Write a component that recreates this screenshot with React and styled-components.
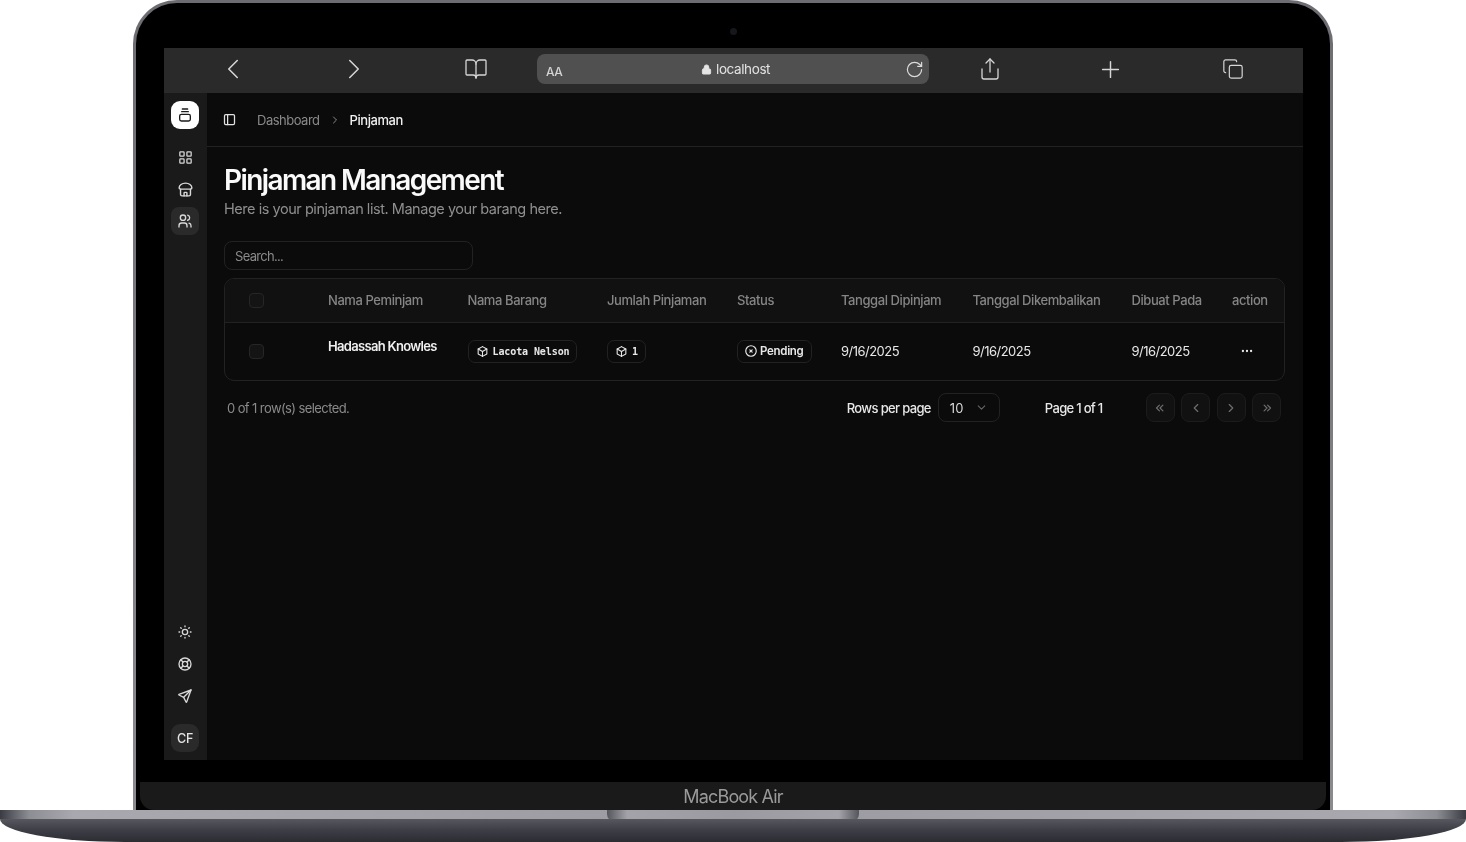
import React from 'react'
import styled, { createGlobalStyle } from 'styled-components'
import {
  ChevronLeft,
  ChevronRight,
  BookOpen,
  Lock,
  RotateCw,
  Share,
  Plus,
  Copy,
} from 'lucide-react'
import {
  TbLayoutGrid,
  TbUsers,
  TbSun,
  TbLifebuoy,
  TbSend,
  TbLayoutSidebar,
  TbBox,
  TbCircleX,
  TbDots,
  TbChevronDown,
  TbChevronRight,
  TbChevronLeft,
  TbChevronsLeft,
  TbChevronsRight,
} from 'react-icons/tb'

const GlobalStyle = createGlobalStyle`
  html, body {
    margin: 0;
    background: #fff;
    overflow: hidden;
  }
  * {
    box-sizing: border-box;
  }
`

const LogoIcon = () => (
  <svg width="16" height="16" viewBox="0 0 24 24" fill="none" stroke="currentColor" strokeWidth="2" strokeLinecap="round">
    <path d="M8 3h8M7 7h10" />
    <rect x="4" y="11" width="16" height="10" rx="2.5" />
  </svg>
)

const StoreIcon = () => (
  <svg width="17" height="17" viewBox="0 0 24 24" fill="none" stroke="currentColor" strokeWidth="2" strokeLinecap="round" strokeLinejoin="round">
    <path d="M3 10c0-4 4-7 9-7s9 3 9 7c0 1-1 1.500-2 1.500H5c-1 0-2-.5-2-1.500z" />
    <path d="M5 11.500V19a2 2 0 0 0 2 2h10a2 2 0 0 0 2-2v-7.500" />
    <path d="M10 21v-4a1 1 0 0 1 1-1h2a1 1 0 0 1 1 1v4" />
  </svg>
)

const columns = '103px 139.500px 139.500px 130px 104px 131.500px 159px 100.500px 1fr'

export default function App() {
  return (
    <Page>
      <GlobalStyle />
      <Lid>
        <Bezel>
          <ScreenArea>
            <Camera />
            <Screen>
              <Toolbar>
                <ToolIcon $ml={57}><ChevronLeft size={34} strokeWidth={1.1} /></ToolIcon>
                <ToolIcon $ml={97}><ChevronRight size={34} strokeWidth={1.1} /></ToolIcon>
                <ToolIcon $ml={98}><BookOpen size={24} strokeWidth={1.3} /></ToolIcon>
                <AddressBar>
                  <AaLabel>AA</AaLabel>
                  <UrlLabel>
                    <Lock size={11} fill="#e6e6e6" strokeWidth={2} />
                    localhost
                  </UrlLabel>
                  <RotateCw size={19} strokeWidth={1.5} color="#dcdcdc" />
                </AddressBar>
                <ToolIcon $ml={49}><Share size={24} strokeWidth={1.3} /></ToolIcon>
                <ToolIcon $ml={96}><Plus size={27} strokeWidth={1.3} /></ToolIcon>
                <ToolIcon $ml={99}><Copy size={22} strokeWidth={1.3} /></ToolIcon>
              </Toolbar>
              <AppBody>
                <Sidebar>
                  <SideGroup>
                    <LogoButton><LogoIcon /></LogoButton>
                    <SideNav>
                      <SideButton><TbLayoutGrid size={17} strokeWidth={1.8} /></SideButton>
                      <SideButton><StoreIcon /></SideButton>
                      <SideButton $active><TbUsers size={16} /></SideButton>
                    </SideNav>
                  </SideGroup>
                  <SideGroup>
                    <SideNav>
                      <SideButton><TbSun size={16} /></SideButton>
                      <SideButton><TbLifebuoy size={16} /></SideButton>
                      <SideButton><TbSend size={16} /></SideButton>
                    </SideNav>
                    <Avatar>CF</Avatar>
                  </SideGroup>
                </Sidebar>
                <Main>
                  <Header>
                    <TbLayoutSidebar size={15} color="#e2e2e2" />
                    <Crumb>Dashboard</Crumb>
                    <TbChevronRight size={12} color="#8a8a8a" />
                    <CrumbCurrent>Pinjaman</CrumbCurrent>
                  </Header>
                  <Content>
                    <Title>Pinjaman Management</Title>
                    <Subtitle>Here is your pinjaman list. Manage your barang here.</Subtitle>
                    <SearchInput placeholder="Search..." readOnly />
                    <TableCard>
                      <HeadRow>
                        <CheckCell><Checkbox /></CheckCell>
                        <HeadCell>Nama Peminjam</HeadCell>
                        <HeadCell>Nama Barang</HeadCell>
                        <HeadCell>Jumlah Pinjaman</HeadCell>
                        <HeadCell>Status</HeadCell>
                        <HeadCell>Tanggal Dipinjam</HeadCell>
                        <HeadCell>Tanggal Dikembalikan</HeadCell>
                        <HeadCell>Dibuat Pada</HeadCell>
                        <HeadCell>action</HeadCell>
                      </HeadRow>
                      <BodyRow>
                        <CheckCell><Checkbox /></CheckCell>
                        <NameCell>Hadassah Knowles</NameCell>
                        <BodyCell>
                          <Badge $mono><TbBox size={13} />Lacota Nelson</Badge>
                        </BodyCell>
                        <BodyCell>
                          <Badge $mono><TbBox size={13} />1</Badge>
                        </BodyCell>
                        <BodyCell>
                          <Badge><TbCircleX size={14} />Pending</Badge>
                        </BodyCell>
                        <BodyCell>9/16/2025</BodyCell>
                        <BodyCell>9/16/2025</BodyCell>
                        <BodyCell>9/16/2025</BodyCell>
                        <BodyCell><DotsWrap><TbDots size={14} /></DotsWrap></BodyCell>
                      </BodyRow>
                    </TableCard>
                    <TableFooter>
                      <Selected>0 of 1 row(s) selected.</Selected>
                      <Pager>
                        <RowsLabel>Rows per page</RowsLabel>
                        <PageSelect>
                          10
                          <TbChevronDown size={13} color="#666" />
                        </PageSelect>
                        <PageLabel>Page 1 of 1</PageLabel>
                        <PageButtons>
                          <PageButton><TbChevronsLeft size={14} /></PageButton>
                          <PageButton><TbChevronLeft size={14} /></PageButton>
                          <PageButton><TbChevronRight size={14} /></PageButton>
                          <PageButton><TbChevronsRight size={14} /></PageButton>
                        </PageButtons>
                      </Pager>
                    </TableFooter>
                  </Content>
                </Main>
              </AppBody>
            </Screen>
          </ScreenArea>
          <Chin>MacBook Air</Chin>
        </Bezel>
      </Lid>
      <Base>
        <BaseTop>
          <Notch />
        </BaseTop>
        <BaseBottom />
      </Base>
    </Page>
  )
}

const Page = styled.div`
  width: 1466px;
  height: 842px;
  overflow: hidden;
  background: #fff;
  font-family: Inter, 'Liberation Sans', sans-serif;
  filter: blur(0.4px);
`

const Lid = styled.div`
  width: 1200px;
  height: 810px;
  margin: 0 auto;
  padding: 3px 3px 0;
  border-radius: 44px 44px 0 0;
  background: linear-gradient(180deg, #6c6c72 0%, #8a8a90 100%);
`

const Bezel = styled.div`
  height: 100%;
  display: flex;
  flex-direction: column;
  background: #000;
  border-radius: 41px 41px 0 0;
`

const ScreenArea = styled.div`
  flex: 1;
  display: flex;
  flex-direction: column;
  align-items: center;
  padding: 25px 27px 22px 28px;
`

const Camera = styled.div`
  width: 7px;
  height: 7px;
  flex-shrink: 0;
  margin-bottom: 13px;
  border-radius: 50%;
  background: #15171a;
`

const Screen = styled.div`
  flex: 1;
  width: 100%;
  display: flex;
  flex-direction: column;
  min-height: 0;
`

const Toolbar = styled.div`
  height: 45px;
  flex-shrink: 0;
  padding-bottom: 3px;
  display: flex;
  align-items: center;
  background: #2a2a2a;
`

const ToolIcon = styled.div`
  width: 24px;
  height: 24px;
  flex-shrink: 0;
  display: flex;
  align-items: center;
  justify-content: center;
  margin-left: ${({ $ml }) => $ml}px;
  color: #d6d6d6;

  svg {
    flex-shrink: 0;
  }
`

const AddressBar = styled.div`
  width: 392px;
  height: 30px;
  margin-left: 49px;
  padding: 0 5px 0 9px;
  display: flex;
  align-items: center;
  justify-content: space-between;
  border-radius: 8px;
  background: #505050;
`

const AaLabel = styled.span`
  margin-top: 5px;
  font-size: 12px;
  font-weight: 500;
  letter-spacing: -0.5px;
  color: #d4d4d4;
`

const UrlLabel = styled.span`
  display: flex;
  align-items: center;
  gap: 4px;
  margin-left: 4px;
  font-size: 13.500px;
  letter-spacing: -0.400px;
  color: #e2e2e2;
`

const AppBody = styled.div`
  flex: 1;
  display: flex;
  min-height: 0;
`

const Sidebar = styled.aside`
  width: 43px;
  flex-shrink: 0;
  padding: 8px 7px 8px 7px;
  display: flex;
  flex-direction: column;
  justify-content: space-between;
  background: #1a1a1a;
`

const SideGroup = styled.div`
  display: flex;
  flex-direction: column;
  gap: 14px;
`

const SideNav = styled.nav`
  display: flex;
  flex-direction: column;
  gap: 4px;
`

const LogoButton = styled.div`
  width: 28px;
  height: 28px;
  display: flex;
  align-items: center;
  justify-content: center;
  border-radius: 9px;
  background: #fff;
  color: #1a1a1a;
`

const SideButton = styled.div`
  width: 28px;
  height: 28px;
  display: flex;
  align-items: center;
  justify-content: center;
  border-radius: 8px;
  color: #d8d8d8;
  background: ${({ $active }) => ($active ? '#2a2a2a' : 'transparent')};
`

const Avatar = styled.div`
  width: 28px;
  height: 28px;
  display: flex;
  align-items: center;
  justify-content: center;
  border-radius: 9px;
  background: #2a2a2a;
  font-size: 12.500px;
  font-weight: 500;
  letter-spacing: -0.300px;
  color: #e4e4e4;
`

const Main = styled.main`
  flex: 1;
  min-width: 0;
  display: flex;
  flex-direction: column;
  background: #0b0b0b;
`

const Header = styled.header`
  height: 54px;
  flex-shrink: 0;
  padding-left: 15px;
  display: flex;
  align-items: center;
  border-bottom: 1px solid #222;
`

const Crumb = styled.span`
  margin: 0 9px 0 20px;
  font-size: 13px;
  letter-spacing: -0.500px;
  color: #8a8a8a;
`

const CrumbCurrent = styled.span`
  margin-left: 9px;
  font-size: 13px;
  font-weight: 500;
  letter-spacing: -0.450px;
  color: #f0f0f0;
`

const Content = styled.div`
  padding: 17px 18px 0 17px;
  display: flex;
  flex-direction: column;
`

const Title = styled.h1`
  margin: 0;
  font-size: 28px;
  line-height: 32px;
  font-weight: 600;
  letter-spacing: -1.600px;
  color: #fafafa;
`

const Subtitle = styled.p`
  margin: 3px 0 0;
  font-size: 14.500px;
  line-height: 20px;
  letter-spacing: -0.460px;
  color: #8f8f8f;
`

const SearchInput = styled.input`
  width: 249px;
  height: 29px;
  margin-top: 22px;
  padding: 0 10px;
  border: 1px solid #222;
  border-radius: 8px;
  outline: none;
  background: transparent;
  font-family: inherit;
  font-size: 13px;
  letter-spacing: -0.700px;
  color: #8a8a8a;

  &::placeholder {
    color: #8a8a8a;
    opacity: 1;
  }
`

const TableCard = styled.div`
  margin-top: 8px;
  border: 1px solid #222;
  border-radius: 10px;
  overflow: hidden;
`

const HeadRow = styled.div`
  height: 44px;
  padding-bottom: 1px;
  display: grid;
  grid-template-columns: ${columns};
  align-items: center;
  background: #111;
  border-bottom: 1px solid #222;
`

const BodyRow = styled.div`
  height: 57px;
  padding-bottom: 1px;
  display: grid;
  grid-template-columns: ${columns};
  align-items: center;
`

const CheckCell = styled.div`
  padding-left: 24px;
  display: flex;
  align-items: center;
`

const Checkbox = styled.span`
  width: 15px;
  height: 15px;
  border: 1px solid #262626;
  border-radius: 4px;
  background: #141414;
`

const HeadCell = styled.div`
  font-size: 13px;
  font-weight: 500;
  letter-spacing: -0.420px;
  white-space: nowrap;
  color: #858585;
`

const BodyCell = styled.div`
  font-size: 13px;
  letter-spacing: -0.520px;
  color: #e8e8e8;
`

const NameCell = styled.div`
  margin-bottom: 11px;
  font-size: 13px;
  font-weight: 600;
  letter-spacing: -0.680px;
  white-space: nowrap;
  color: #efefef;
`

const Badge = styled.span`
  height: 23px;
  display: inline-flex;
  align-items: center;
  gap: ${({ $mono }) => ($mono ? '4px' : '2px')};
  padding: 0 7px 0 ${({ $mono }) => ($mono ? '7px' : '6px')};
  border: 1px solid #222;
  border-radius: 7px;
  white-space: nowrap;
  color: #e8e8e8;
  font-family: ${({ $mono }) => ($mono ? "'DejaVu Sans Mono', 'Liberation Mono', monospace" : 'inherit')};
  font-size: ${({ $mono }) => ($mono ? '10px' : '11.500px')};
  font-weight: 600;
  letter-spacing: ${({ $mono }) => ($mono ? '-0.100px' : '-0.300px')};
`

const DotsWrap = styled.span`
  display: flex;
  padding-left: 8px;
`

const TableFooter = styled.div`
  height: 29px;
  margin-top: 12px;
  padding: 0 4px 0 3px;
  display: flex;
  align-items: center;
  justify-content: space-between;
`

const Selected = styled.span`
  font-size: 13px;
  letter-spacing: -0.600px;
  color: #8a8a8a;
`

const Pager = styled.div`
  display: flex;
  align-items: center;
`

const RowsLabel = styled.span`
  font-size: 13px;
  font-weight: 500;
  letter-spacing: -0.650px;
  color: #e8e8e8;
`

const PageSelect = styled.div`
  width: 62px;
  height: 29px;
  margin-left: 7px;
  padding: 0 11px;
  display: flex;
  align-items: center;
  justify-content: space-between;
  border: 1px solid #222;
  border-radius: 8px;
  font-size: 13px;
  color: #d8d8d8;
`

const PageLabel = styled.span`
  margin-left: 45px;
  font-size: 13px;
  font-weight: 500;
  letter-spacing: -0.700px;
  color: #e8e8e8;
`

const PageButtons = styled.div`
  display: flex;
  gap: 6.500px;
  margin-left: 43px;
`

const PageButton = styled.div`
  width: 29px;
  height: 29px;
  display: flex;
  align-items: center;
  justify-content: center;
  border: 1px solid #1c1c1c;
  border-radius: 8px;
  background: #111;
  color: #6e6e6e;
`

const Chin = styled.div`
  height: 28px;
  flex-shrink: 0;
  margin: 0 4px;
  display: flex;
  align-items: center;
  justify-content: center;
  border-radius: 0 0 14px 14px;
  background: #1a1a1a;
  font-size: 18px;
  letter-spacing: -0.850px;
  color: #9a9a9a;
`

const Base = styled.div`
  height: 32px;
  display: flex;
  flex-direction: column;
`

const BaseTop = styled.div`
  height: 9px;
  flex-shrink: 0;
  display: flex;
  justify-content: center;
  background: linear-gradient(90deg, #3a3b42 0%, #8d8d94 2%, #a8a8ae 5%, #9a9aa0 50%, #a8a8ae 95%, #8d8d94 98%, #3a3b42 100%);
`

const Notch = styled.div`
  width: 252px;
  height: 12px;
  flex-shrink: 0;
  border-radius: 0 0 8px 8px;
  background: linear-gradient(90deg, #55565c 0%, #a2a2a8 8%, #9a9aa0 50%, #a2a2a8 92%, #55565c 100%);
`

const BaseBottom = styled.div`
  flex: 1;
  border-radius: 0 0 130px 130px / 0 0 24px 24px;
  background: linear-gradient(180deg, #57585f 0%, #3f4047 45%, #2c2d33 100%);
`
